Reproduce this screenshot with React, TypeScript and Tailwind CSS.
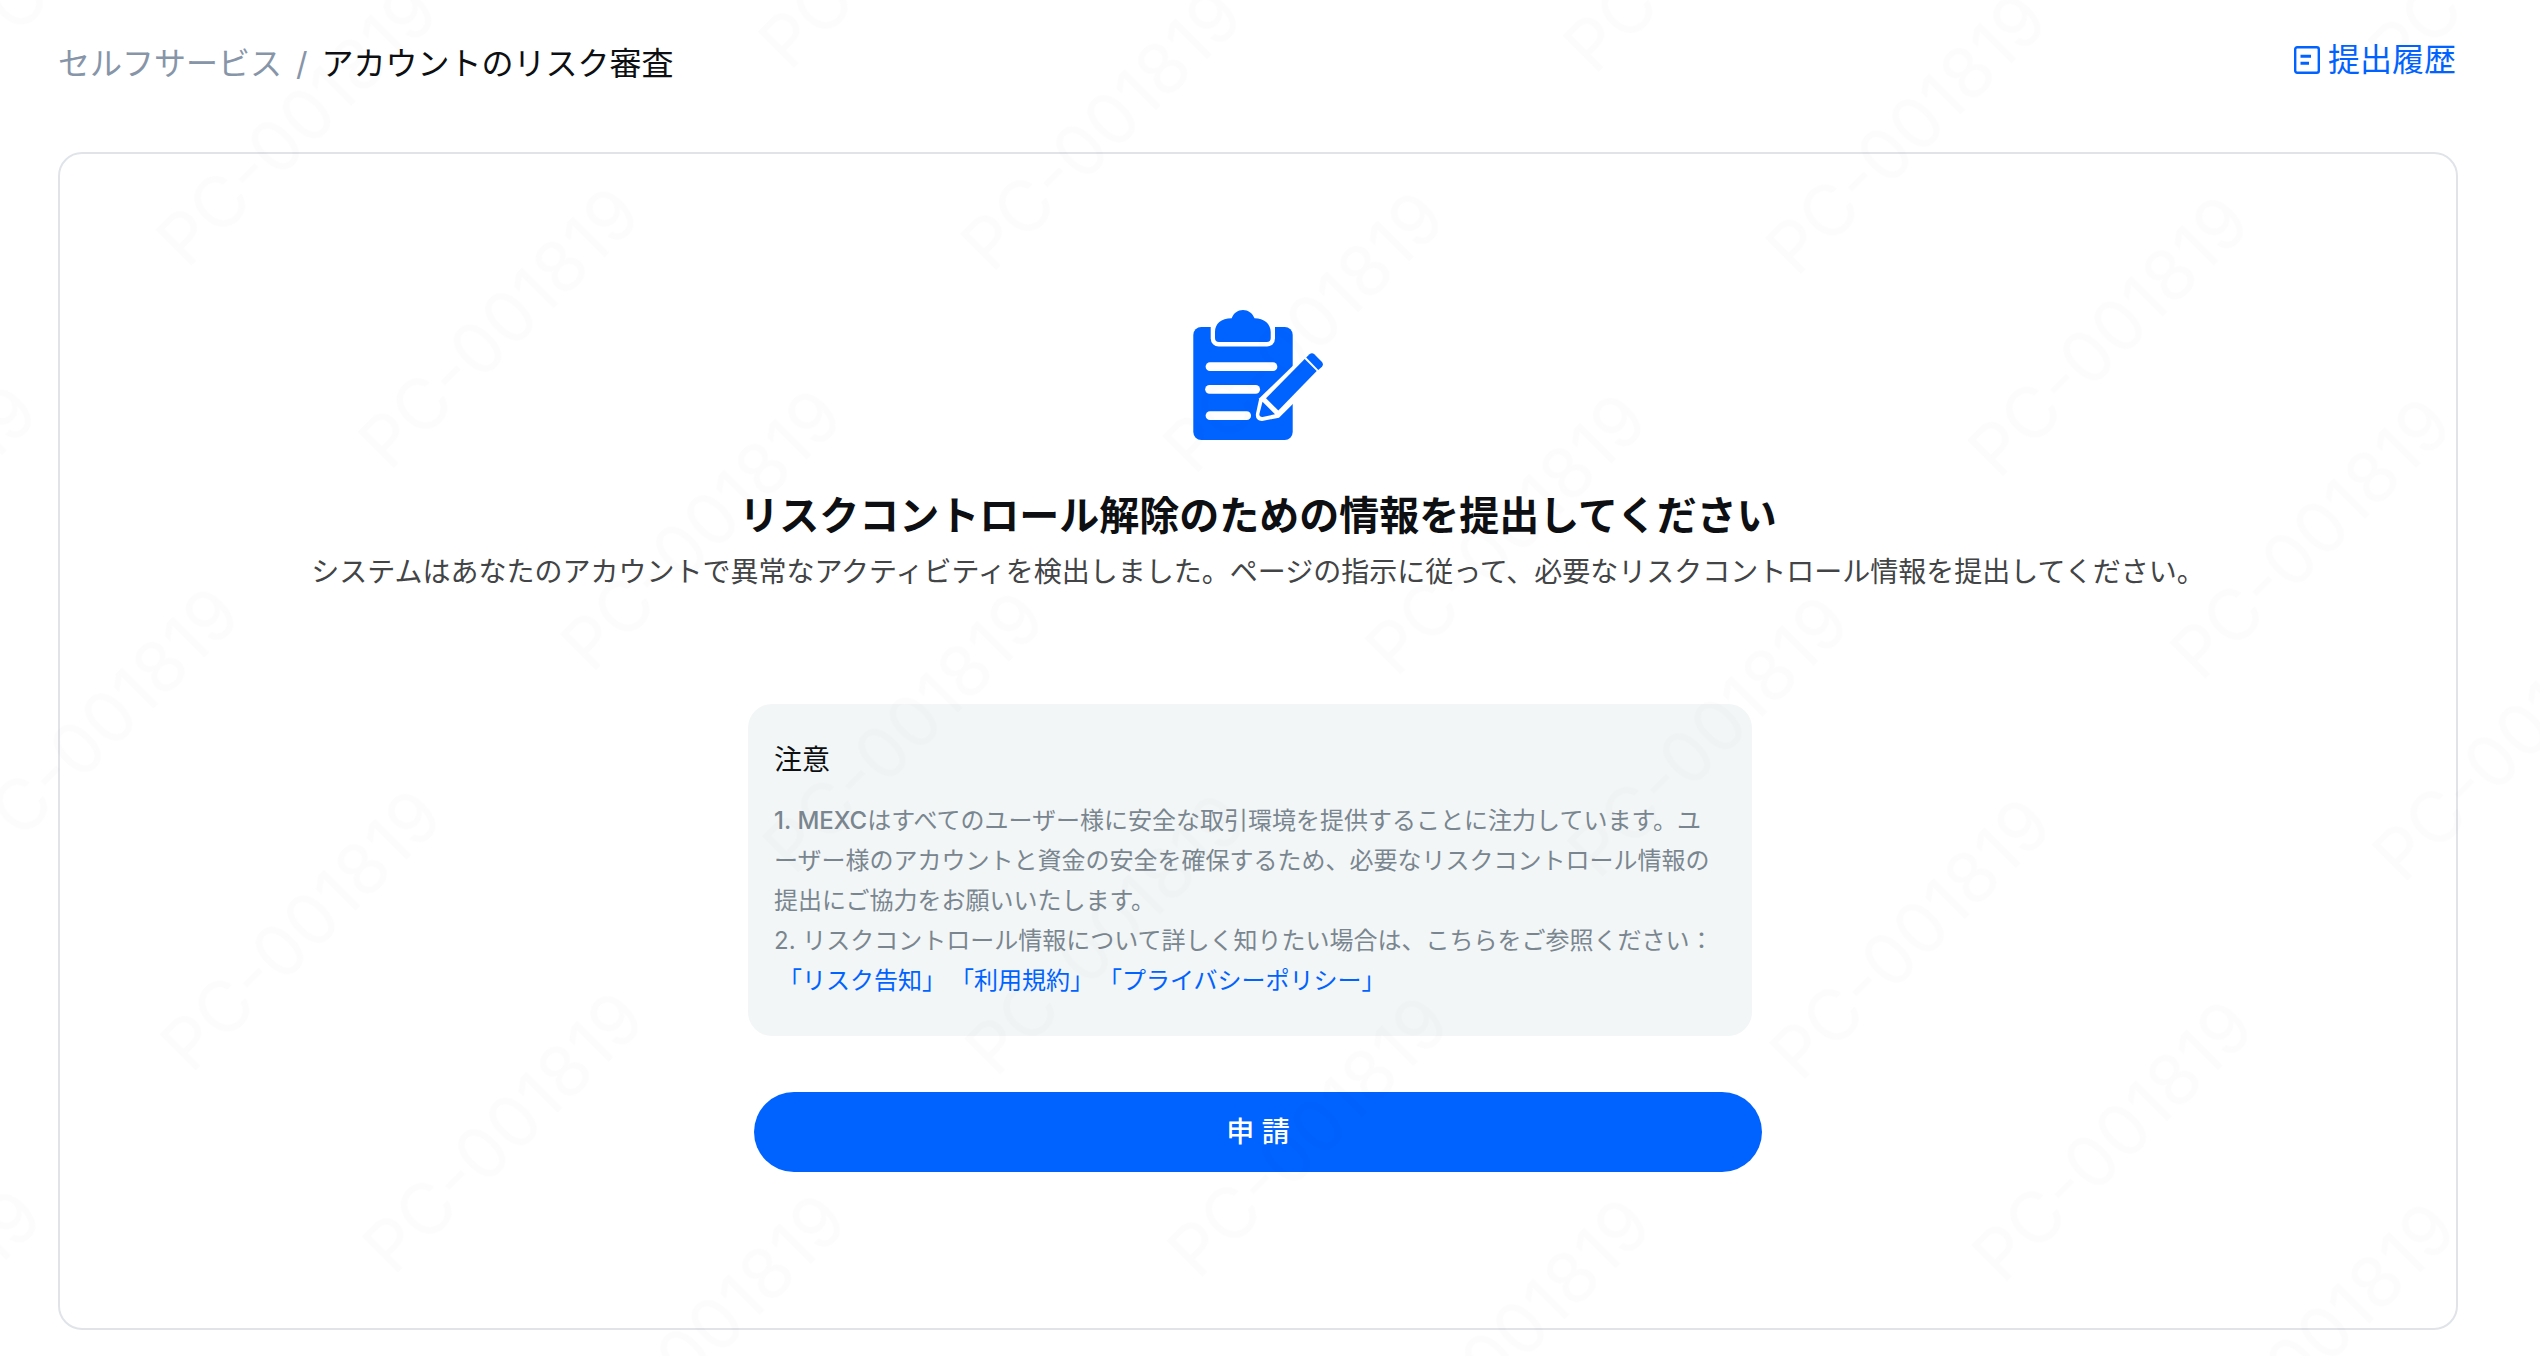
const links = ["「リスク告知」", "「利用規約」", "「プライバシーポリシー」"];

const Watermark = () => (
  <svg aria-hidden="true" className="pointer-events-none absolute inset-0 h-full w-full">
    <defs>
      <pattern
        id="watermark"
        width="566"
        height="286"
        patternUnits="userSpaceOnUse"
        patternTransform="translate(67 178) rotate(-45)"
      >
        <text x="20" y="150" className="fill-black/[0.01] text-[70px]">
          PC-001819
        </text>
      </pattern>
    </defs>
    <rect width="100%" height="100%" fill="url(#watermark)" />
  </svg>
);

const HistoryIcon = () => (
  <svg viewBox="0 0 26 28" className="h-7 w-[26px]" fill="none" stroke="currentColor" strokeWidth="2.4">
    <rect x="1.2" y="1.2" width="23.6" height="25.6" rx="2" />
    <path d="M6.5 10.3H17M6.5 17.3H15" strokeWidth="3" />
  </svg>
);

const ClipboardIcon = () => (
  <svg viewBox="0 0 130 130" className="h-[130px] w-[130px]" fill="#0062ff">
    <rect x="0.3" y="17" width="99.4" height="113" rx="8" />
    <path d="M17.7 16V28.5a8 8 0 0 0 8 8H74a8 8 0 0 0 8-8V16Z" fill="#fff" />
    <path d="M22 22C22 14 28 8.3 38.7 8.3C40.5 3 45 0 50 0C55 0 59.5 3 61.5 8.3C71 8.3 77.7 14 77.7 22V28a4 4 0 0 1-4 4H26a4 4 0 0 1-4-4Z" />
    <g stroke="#fff" strokeWidth="8.7" strokeLinecap="round">
      <path d="M17 56.7H80" />
      <path d="M16.5 79.3H62.7" />
      <path d="M17 105.7H53.7" />
    </g>
    <path d="M112 44L66.3 88.3L63 103.5C62.3 108 64.5 111 69 111L86 107.7L130 64Z" fill="#fff" />
    <path d="M111.7 49L123.7 61L85.3 100.5L73 88.3Z" />
    <path d="M69.5 91.7L82 104.3L69.5 106.9C67.3 107 66.2 105.8 66.4 104Z" />
    <path d="M113.2 47.5L116.5 44.2C118 43 120 43 121.3 44.3L129 52C130.2 53.5 130.2 55.2 129 56.7L125.3 60Z" />
  </svg>
);

const App = () => (
  <div className="relative flex min-h-screen flex-col overflow-hidden bg-white pr-[82px] pb-[26px] pl-[58px] font-['Inter','Noto_Sans_CJK_JP',sans-serif] text-[#0d0f12]">
    <header className="flex h-[152px] items-start justify-between pt-9 pr-0.5">
      <nav aria-label="パンくず" className="flex gap-[14px] pt-1 text-[32px] leading-12">
        <a href="#self-service" className="text-[#8795a9]">
          セルフサービス
        </a>
        <span className="text-[#8795a9]">/</span>
        <span aria-current="page">アカウントのリスク審査</span>
      </nav>
      <a href="#history" className="flex items-center gap-2 text-[32px] leading-12 text-[#0062ff]">
        <HistoryIcon />
        提出履歴
      </a>
    </header>

    <main className="flex flex-1 flex-col items-center rounded-3xl border-2 border-[#e0e4e8] pt-[156px]">
      <ClipboardIcon />
      <h1 className="mt-12 text-[40px] leading-14 font-bold">
        リスクコントロール解除のための情報を提出してください
      </h1>
      <p className="mt-2 text-[28px] leading-10 text-[#424446]">
        システムはあなたのアカウントで異常なアクティビティを検出しました。ページの指示に従って、必要なリスクコントロール情報を提出してください。
      </p>

      <div className="mt-28 flex w-full max-w-[1020px] flex-col">
        <section className="mr-4 rounded-3xl bg-[#f2f6f7] pt-9 pr-8 pb-[35px] pl-[26px]">
          <h2 className="text-[28px] leading-10">注意</h2>
          <div className="mt-[21px] text-[24px] leading-10 text-[#7a868f]">
            <p>
              <span className="font-medium">1. MEXC</span>
              はすべてのユーザー様に安全な取引環境を提供することに注力しています。ユーザー様のアカウントと資金の安全を確保するため、必要なリスクコントロール情報の提出にご協力をお願いいたします。
            </p>
            <p>2. リスクコントロール情報について詳しく知りたい場合は、こちらをご参照ください：</p>
            <p className="flex gap-1 pl-1">
              {links.map((label) => (
                <a key={label} href="#policy" className="text-[#0062ff]">
                  {label}
                </a>
              ))}
            </p>
          </div>
        </section>
        <button type="button" className="mx-1.5 mt-14 h-20 rounded-full bg-[#0062ff] text-[28px] font-medium text-white">
          申 請
        </button>
      </div>
    </main>

    <Watermark />
  </div>
);

export default App;
